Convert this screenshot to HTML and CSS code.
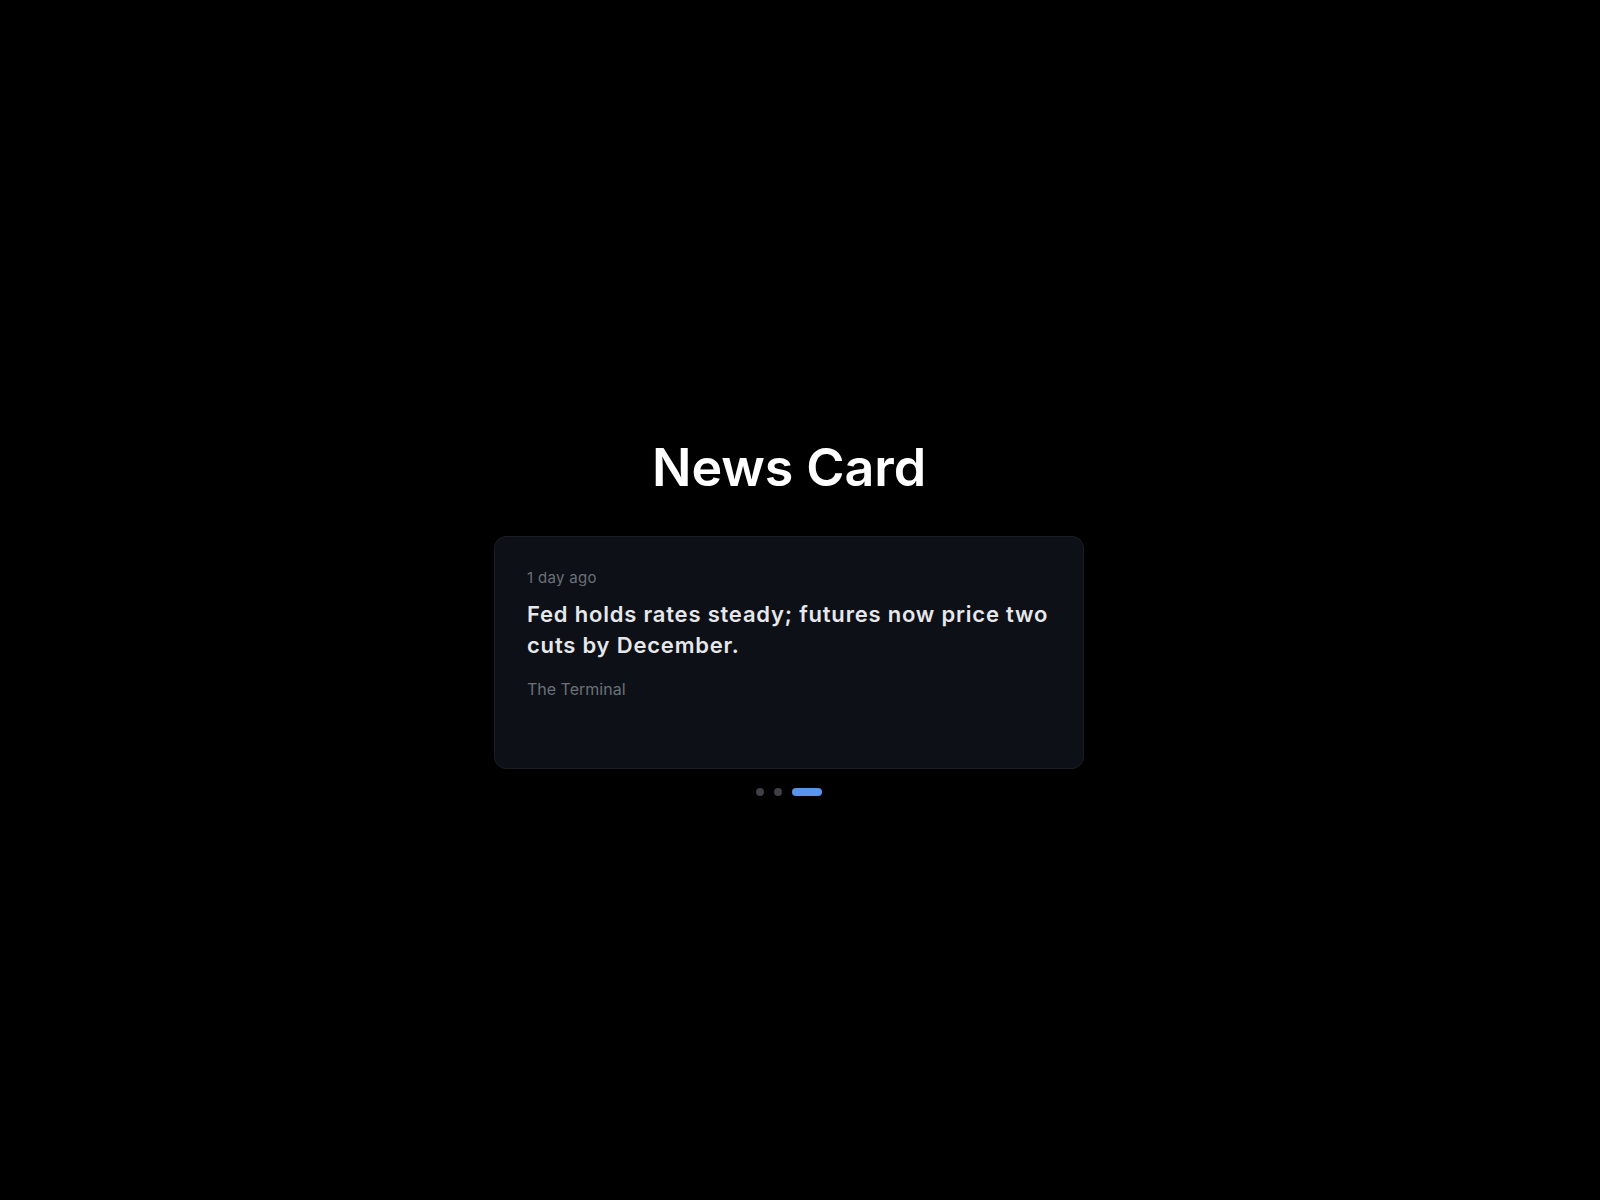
FILE: index.html
```html
<!DOCTYPE html>
<html lang="en">
<head>
    <meta charset="UTF-8">
    <meta name="viewport" content="width=device-width, initial-scale=1.0">
    <title>News Card</title>
    <link rel="stylesheet" href="styles.css">
</head>
<body>
    <main class="page">
        <h1>News Card</h1>

        <div class="news-card">
            <p class="news-time">1 day ago</p>
            <h2 class="news-title">Fed holds rates steady; futures now price two cuts by December.</h2>
            <p class="news-source">The Terminal</p>
        </div>

        <div class="dots">
            <span class="dot"></span>
            <span class="dot"></span>
            <span class="dot active"></span>
        </div>
    </main>
</body>
</html>
```

FILE: styles.css
```css
* {
    box-sizing: border-box;
}

html, body {
    margin: 0;
    height: 100%;
}

body {
    font-family: 'Inter', 'Noto Sans', sans-serif;
    background-color: #000;
    color: #fff;
}

.page {
    display: flex;
    flex-direction: column;
    align-items: center;
    padding-top: 437px;
    padding-right: 22px;
}

h1 {
    margin: 0 0 37px;
    font-size: 52px;
    font-weight: 600;
    line-height: 62px;
    letter-spacing: -0.1px;
}

.news-card {
    width: 590px;
    height: 233px;
    padding: 30px 32px 32px;
    background-color: #0d1017;
    border: 1px solid #1a1d24;
    border-radius: 12px;
}

.news-time {
    margin: 0;
    font-size: 15px;
    line-height: 22px;
    letter-spacing: 0.3px;
    color: #6b7078;
}

.news-title {
    margin: 10px 0 0;
    font-size: 22px;
    font-weight: 600;
    line-height: 31px;
    letter-spacing: 0.8px;
    color: #e6e7ea;
}

.news-source {
    margin: 16px 0 0;
    font-size: 16px;
    line-height: 24px;
    color: #6b7078;
}

/* 分页指示点 */
.dots {
    display: flex;
    gap: 10px;
    margin-top: 19px;
}

.dot {
    width: 8px;
    height: 8px;
    border-radius: 4px;
    background-color: #3f4146;
}

.dot.active {
    width: 30px;
    background-color: #5a93ec;
}
```
